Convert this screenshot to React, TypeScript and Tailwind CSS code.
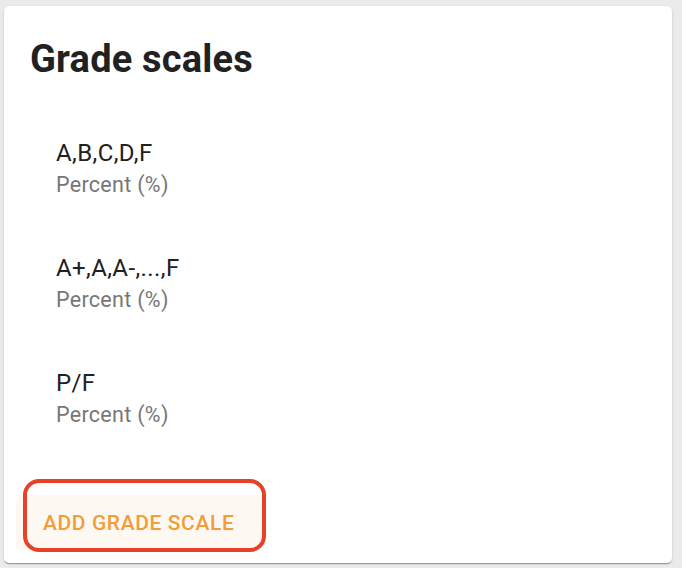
import React from 'react';

interface GradeScale {
  name: string;
  type: string;
}

const scales: GradeScale[] = [
  { name: 'A,B,C,D,F', type: 'Percent (%)' },
  { name: 'A+,A,A-,...,F', type: 'Percent (%)' },
  { name: 'P/F', type: 'Percent (%)' },
];

const App: React.FC = () => {
  return (
    <div className="min-h-[568px] w-full bg-[#ebebeb] pt-[6px] pl-[4px] pr-[10px] pb-[5px] font-['Roboto',sans-serif]">
      <div className="relative h-[557px] w-[668px] rounded-[5px] bg-white pt-[31px] shadow-[0_2px_1px_-1px_rgba(0,0,0,0.2),0_1px_1px_0_rgba(0,0,0,0.14),0_1px_3px_0_rgba(0,0,0,0.12)]">
        <h2 className="px-[26px] text-[38px] leading-[44px] font-bold tracking-[0.2px] text-[#212121]">Grade scales</h2>

        <ul className="mt-[30px]">
          {scales.map(scale => (
            <li key={scale.name} className="px-[52px] py-[26px]">
              <div className="text-[24px] leading-[33px] tracking-[0.4px] text-[#212121]">{scale.name}</div>
              <div className="text-[21.5px] leading-[30px] tracking-[0.3px] text-[#777777]">{scale.type}</div>
            </li>
          ))}
        </ul>

        <button className="ml-[12px] mt-[39px] flex h-[56px] w-[246px] items-center rounded-[6px] bg-[#fdf8f2] pl-[27px] text-[21px] leading-[24px] font-medium tracking-[0.6px] text-[#f29d38] uppercase">
          Add grade scale
        </button>

        {/* highlight annotation */}
        <div className="pointer-events-none absolute left-[19px] top-[473px] h-[73px] w-[243px] rounded-[16px] border-4 border-[#e8412a]" />
      </div>
    </div>
  );
};

export default App;
